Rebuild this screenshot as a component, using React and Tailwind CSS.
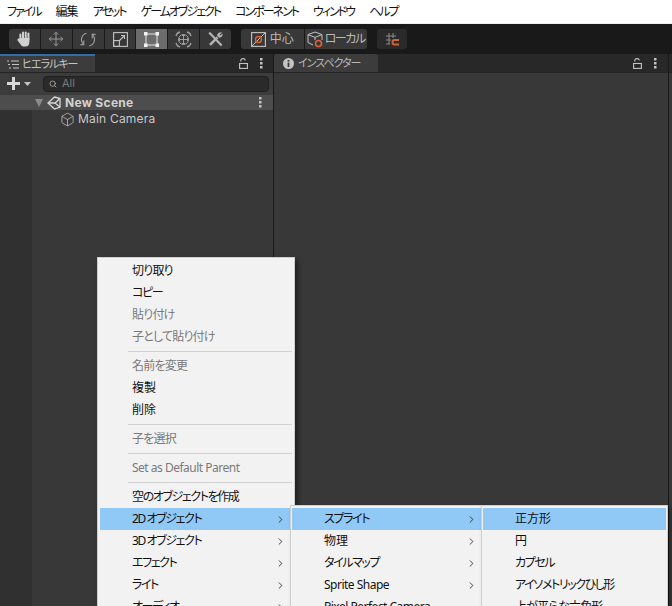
import { Box, ChevronRight, Move, Search } from "lucide-react";

const jp = "[font-family:'Noto_Sans','Noto_Sans_CJK_JP',sans-serif] [font-feature-settings:'palt']";

const menuBar = ["ファイル", "編集", "アセット", "ゲームオブジェクト", "コンポーネント", "ウィンドウ", "ヘルプ"];

const mainMenu = [
  { label: "切り取り" },
  { label: "コピー" },
  { label: "貼り付け", off: true },
  { label: "子として貼り付け", off: true },
  { sep: true },
  { label: "名前を変更", off: true },
  { label: "複製" },
  { label: "削除" },
  { sep: true },
  { label: "子を選択", off: true },
  { sep: true },
  { label: "Set as Default Parent", off: true },
  { sep: true },
  { label: "空のオブジェクトを作成" },
  { label: "2D オブジェクト", sub: true, active: true },
  { label: "3D オブジェクト", sub: true },
  { label: "エフェクト", sub: true },
  { label: "ライト", sub: true },
  { label: "オーディオ", sub: true },
];

const spriteMenu = [
  { label: "スプライト", sub: true, active: true },
  { label: "物理", sub: true },
  { label: "タイルマップ", sub: true },
  { label: "Sprite Shape", sub: true },
  { label: "Pixel Perfect Camera" },
];

const shapeMenu = [
  { label: "正方形", active: true },
  { label: "円" },
  { label: "カプセル" },
  { label: "アイソメトリックひし形" },
  { label: "上が平らな六角形" },
];

// the reference font has much narrower kana than Noto
const track = (label) => {
  if (/[ァ-ヶー]/.test(label)) return "tracking-[-1.4px]";
  if (/[ぁ-ん]/.test(label)) return "tracking-[-0.8px]";
  if (/^[A-Za-z ]+$/.test(label)) return "tracking-[-0.5px]";
  return "";
};

const Kebab = () => (
  <svg width="3" height="11" viewBox="0 0 3 11" className="shrink-0">
    <rect y="0" width="2.5" height="2.5" fill="#c4c4c4" />
    <rect y="4" width="2.5" height="2.5" fill="#c4c4c4" />
    <rect y="8" width="2.5" height="2.5" fill="#c4c4c4" />
  </svg>
);

const OpenLock = () => (
  <svg width="9" height="11" viewBox="0 0 9 11" fill="none" stroke="#c4c4c4" strokeWidth="1.1" className="shrink-0">
    <rect x="0.6" y="5.5" width="7.8" height="4.9" />
    <path d="M1.8 3.4 V2.6 Q1.8 0.6 4 0.6 Q6.2 0.6 6.2 2.6" />
  </svg>
);

const HandIcon = () => (
  <svg width="15" height="16" viewBox="0 0 15 16" fill="#d0d0d0">
    <rect x="2.4" y="2.4" width="2" height="7" rx="1" />
    <rect x="5" y="0.6" width="2" height="8" rx="1" />
    <rect x="7.7" y="0.4" width="2" height="8" rx="1" />
    <rect x="10.4" y="1.6" width="2" height="8" rx="1" />
    <path d="M2.4 7 H12.4 V11 Q12.4 15.6 8 15.6 H6.4 Q4.6 15.6 3.6 13.6 L0.6 9.4 Q0 8 1.2 7.6 Q2 7.4 2.6 8.2 Z" />
  </svg>
);

const RotateIcon = () => (
  <svg width="16" height="15" viewBox="0 0 16 15" fill="none" stroke="#9c9c9c" strokeWidth="1.1">
    <path d="M6.6 1.2 A6.4 6.4 0 0 0 3.4 12" />
    <path d="M3.8 8.6 V12.6 H0.4" />
    <path d="M9.4 13.8 A6.4 6.4 0 0 0 12.6 3" />
    <path d="M12.2 6.4 V2.4 H15.6" />
  </svg>
);

const ScaleIcon = () => (
  <svg width="15" height="15" viewBox="0 0 15 15" fill="none" stroke="#c4c4c4" strokeWidth="1.1">
    <rect x="0.6" y="0.6" width="13.8" height="13.8" />
    <rect x="0.6" y="8.6" width="5.8" height="5.8" />
    <path d="M6 9 L11.5 3.5 M8 3.5 H11.5 V7" />
  </svg>
);

const RectIcon = () => (
  <svg width="15" height="15" viewBox="0 0 15 15" fill="none">
    <rect x="2" y="2" width="11" height="11" stroke="#e4e4e4" strokeWidth="1" />
    <rect x="0" y="0" width="3.5" height="3.5" fill="#f2f2f2" />
    <rect x="11.5" y="0" width="3.5" height="3.5" fill="#f2f2f2" />
    <rect x="0" y="11.5" width="3.5" height="3.5" fill="#f2f2f2" />
    <rect x="11.5" y="11.5" width="3.5" height="3.5" fill="#f2f2f2" />
  </svg>
);

const TransformIcon = () => (
  <svg width="17" height="17" viewBox="0 0 17 17" fill="none" stroke="#9c9c9c" strokeWidth="1">
    <circle cx="8.5" cy="8.5" r="5" />
    <path d="M8.5 3.5 V13.5 M3.5 8.5 H13.5" />
    <path d="M7 5 L8.5 3.5 L10 5 M7 12 L8.5 13.5 L10 12 M5 7 L3.5 8.5 L5 10 M12 7 L13.5 8.5 L12 10" />
    <path d="M1 5 Q1.8 1.8 5 1 M12 1 Q15.2 1.8 16 5 M1 12 Q1.8 15.2 5 16 M12 16 Q15.2 15.2 16 12" strokeWidth="1.3" />
  </svg>
);

const ToolsIcon = () => (
  <svg width="17" height="17" viewBox="0 0 17 17" fill="none" stroke="#b4b4b4">
    <path d="M2.2 1.6 L5.6 5 L14.6 14.4" strokeWidth="2.2" />
    <path d="M3 13.8 L10.4 6.4" strokeWidth="2.6" />
    <path d="M14.6 1.6 L12.4 3.8 L13.4 4.8 L15.4 3 Q15.6 6 12.6 6.4 Q10.2 6.2 10.4 4 Q11 1.4 14.6 1.6 Z" fill="#b4b4b4" strokeWidth="0.6" />
  </svg>
);

const PivotIcon = () => (
  <svg width="15" height="15" viewBox="0 0 15 15" fill="none">
    <rect x="0.6" y="0.6" width="13.8" height="13.8" stroke="#c4c4c4" strokeWidth="1.1" />
    <path d="M1 14 L14 1" stroke="#c4c4c4" strokeWidth="1" />
    <circle cx="7.5" cy="7.5" r="3" stroke="#e0633a" strokeWidth="1.4" />
  </svg>
);

const LocalIcon = () => (
  <svg width="18" height="17" viewBox="0 0 18 17" fill="none" className="shrink-0">
    <path d="M8 1 L15 3.6 V9 M8 1 L1 3.6 V11.5 L6 14 M1 3.6 L8 6.4 L15 3.6 M8 6.4 V9" stroke="#c4c4c4" strokeWidth="1" />
    <circle cx="11.5" cy="12.5" r="3" stroke="#e0633a" strokeWidth="1.5" />
  </svg>
);

const SnapIcon = () => (
  <svg width="15" height="15" viewBox="0 0 15 15" fill="none">
    <path d="M4 1 V12 M8 1 V6 M1 4 H11 M1 8 H6 M1 12 H5" stroke="#8a8a8a" strokeWidth="1" />
    <path d="M14 8 H9.5 Q7.5 8 7.5 10.2 Q7.5 12.5 9.5 12.5 H14" stroke="#d0653a" strokeWidth="2" />
  </svg>
);

const UnityIcon = () => (
  <svg width="14" height="14" viewBox="0 0 14 14" fill="none" stroke="#d8d8d8" strokeWidth="1.3">
    <path d="M7.5 1 L13 2.5 L13 11 L7.5 13 L1 7 Z" />
    <path d="M1 7 H8 L13 2.5 M8 7 L13 11" />
  </svg>
);

const tools = [
  <HandIcon key="hand" />,
  <Move key="move" size={16} color="#a0a0a0" strokeWidth={1.4} />,
  <RotateIcon key="rotate" />,
  <ScaleIcon key="scale" />,
  <RectIcon key="rect" />,
  <TransformIcon key="transform" />,
  <ToolsIcon key="tools" />,
];

const MenuRows = ({ items, arrowClass }) =>
  items.map((item, i) =>
    item.sep ? (
      <div key={i} className="h-[7px] pl-[28px] flex items-center">
        <div className="h-px w-full bg-[#d0d0d0]"></div>
      </div>
    ) : (
      <div
        key={i}
        className={`h-[22px] pl-8 flex items-center justify-between text-[12px] ${
          item.active ? "bg-[#90c8f6]" : ""
        } ${item.off ? "text-[#7a7a7a]" : "text-[#111111]"}`}
      >
        <span className={`whitespace-nowrap ${track(item.label)}`}>{item.label}</span>
        {item.sub && <ChevronRight size={11} strokeWidth={1.8} color="#222222" className={arrowClass} />}
      </div>
    )
  );

const App = () => {
  return (
    <div className={`relative w-[672px] h-[606px] overflow-hidden bg-[#191919] ${jp}`}>
      {/* Menu bar */}
      <div className="h-[23px] bg-white border-b border-[#f0f0f0] box-content flex items-center pl-[7px] gap-[15px] text-[12px] text-[#111111]">
        {menuBar.map((m) => (
          <span key={m} className={m === "編集" ? "tracking-[-1px]" : "tracking-[-2px]"}>
            {m}
          </span>
        ))}
      </div>

      {/* Toolbar */}
      <div className="h-[30px] pl-[9px] flex items-center bg-[#191919]">
        <div className="flex h-[20px] w-[222px] rounded-[3px] overflow-hidden gap-px">
          {tools.map((icon, i) => (
            <div
              key={i}
              className={`flex-1 flex items-center justify-center ${i === 4 ? "bg-[#6c6c6c]" : "bg-[#383838]"}`}
            >
              {icon}
            </div>
          ))}
        </div>
        <div className="ml-[10px] flex h-[20px] w-[126px] rounded-[3px] overflow-hidden gap-px text-[12px] text-[#b8b8b8]">
          <div className="flex-1 bg-[#383838] flex items-center justify-center gap-[4px]">
            <PivotIcon />
            <span className="whitespace-nowrap">中心</span>
          </div>
          <div className="flex-1 bg-[#383838] flex items-center justify-center">
            <LocalIcon />
            <span className="whitespace-nowrap tracking-[-1.4px]">ローカル</span>
          </div>
        </div>
        <div className="ml-[10px] h-[20px] w-[30px] rounded-[3px] bg-[#2a2a2a] flex items-center justify-center">
          <SnapIcon />
        </div>
      </div>

      {/* Panels */}
      <div className="flex h-[552px] gap-px">
        {/* Hierarchy */}
        <div className="w-[273px] flex flex-col">
          <div className="h-[18px] bg-[#282828] flex items-center shrink-0">
            <div className="w-[95px] h-full bg-[#3c3c3c] border-t-2 border-[#2f6ea8] flex items-center pl-[7px] gap-[3px] text-[11px] text-[#c4c4c4]">
              <svg width="12" height="9" viewBox="0 0 12 9" stroke="#c4c4c4" strokeWidth="1">
                <path d="M0 1 H2 M4 1 H12 M1 4.5 H3 M5 4.5 H12 M2 8 H4 M6 8 H12" />
              </svg>
              <span className="whitespace-nowrap tracking-[-1px]">ヒエラルキー</span>
            </div>
            <div className="ml-auto mr-[10px] flex items-center gap-[12px]">
              <OpenLock />
              <Kebab />
            </div>
          </div>
          <div className="h-[22px] bg-[#3c3c3c] border-t border-[#232323] flex items-center shrink-0">
            <svg width="13" height="13" viewBox="0 0 13 13" fill="#d8d8d8" className="ml-[7px]">
              <rect x="5" y="0" width="3" height="13" />
              <rect x="0" y="5" width="13" height="3" />
            </svg>
            <svg width="7" height="4" viewBox="0 0 7 4" fill="#c4c4c4" className="ml-[4px]">
              <path d="M0 0 H7 L3.5 4 Z" />
            </svg>
            <div className="ml-[12px] w-[226px] h-[16px] rounded-[4px] bg-[#2a2a2a] border border-[#212121] flex items-center pl-[5px] gap-[5px] text-[11px] text-[#7c7c7c] [font-family:'Inter',sans-serif]">
              <Search size={8} color="#b0b0b0" strokeWidth={2.4} />
              <span>All</span>
            </div>
          </div>
          <div className="h-[16px] bg-[#4d4d4d] border-t border-[#3c3c3c] flex items-center shrink-0">
            <svg width="8" height="8" viewBox="0 0 8 8" fill="#8a8a8a" className="ml-[35px]">
              <path d="M0 0 H8 L4 8 Z" />
            </svg>
            <span className="ml-[4px]">
              <UnityIcon />
            </span>
            <span className="ml-[4px] text-[12px] font-bold tracking-[0.3px] text-[#d2d2d2] [font-family:'Inter',sans-serif]">
              New Scene
            </span>
            <span className="ml-auto mr-[11px] flex">
              <Kebab />
            </span>
          </div>
          <div className="flex-1 flex">
            <div className="w-[32px] bg-[#303030]"></div>
            <div className="flex-1 bg-[#383838]">
              <div className="h-[17px] pt-px flex items-center pl-[28px] gap-[3px] text-[12px] tracking-[0.2px] text-[#c8c8c8] [font-family:'Inter',sans-serif]">
                <Box size={15} color="#c4c4c4" strokeWidth={1.2} />
                <span>Main Camera</span>
              </div>
            </div>
          </div>
        </div>

        {/* Inspector */}
        <div className="w-[394px] flex flex-col">
          <div className="h-[18px] bg-[#282828] flex items-center shrink-0">
            <div className="w-[104px] h-full bg-[#3c3c3c] rounded-t-[3px] flex items-center pl-[9px] gap-[4px] text-[11px] text-[#b8b8b8]">
              <svg width="11" height="11" viewBox="0 0 11 11">
                <circle cx="5.5" cy="5.5" r="5.5" fill="#c4c4c4" />
                <rect x="4.6" y="2" width="1.8" height="1.6" fill="#3c3c3c" />
                <rect x="4.6" y="4.6" width="1.8" height="4.4" fill="#3c3c3c" />
              </svg>
              <span className="whitespace-nowrap tracking-[-1px]">インスペクター</span>
            </div>
            <div className="ml-auto mr-[11px] flex items-center gap-[12px]">
              <OpenLock />
              <Kebab />
            </div>
          </div>
          <div className="flex-1 bg-[#383838] border-t border-[#232323]"></div>
        </div>

        <div className="flex-1 flex flex-col">
          <div className="h-[18px] bg-[#282828]"></div>
          <div className="flex-1 bg-[#383838] border-t border-[#232323]"></div>
        </div>
      </div>

      {/* Context menu */}
      <div className="absolute left-[97px] top-[257px] w-[198px] h-[400px] bg-[#f2f2f2] border border-[#cfcfcf] p-[2px] shadow-[3px_3px_5px_rgba(0,0,0,0.45)]">
        <MenuRows items={mainMenu} arrowClass="mr-[6px]" />
      </div>
      <div className="absolute left-[290px] top-[505px] w-[201px] h-[200px] bg-[#f2f2f2] border border-[#cfcfcf] pl-px pr-[2px] pt-[2px] shadow-[3px_3px_5px_rgba(0,0,0,0.3)]">
        <MenuRows items={spriteMenu} arrowClass="mr-[11px]" />
      </div>
      <div className="absolute left-[481px] top-[505px] w-[187px] h-[200px] bg-[#f2f2f2] border border-[#cfcfcf] pt-[2px] pl-px pr-px shadow-[3px_3px_5px_rgba(0,0,0,0.3)]">
        <MenuRows items={shapeMenu} />
      </div>
    </div>
  );
};

export default App;
